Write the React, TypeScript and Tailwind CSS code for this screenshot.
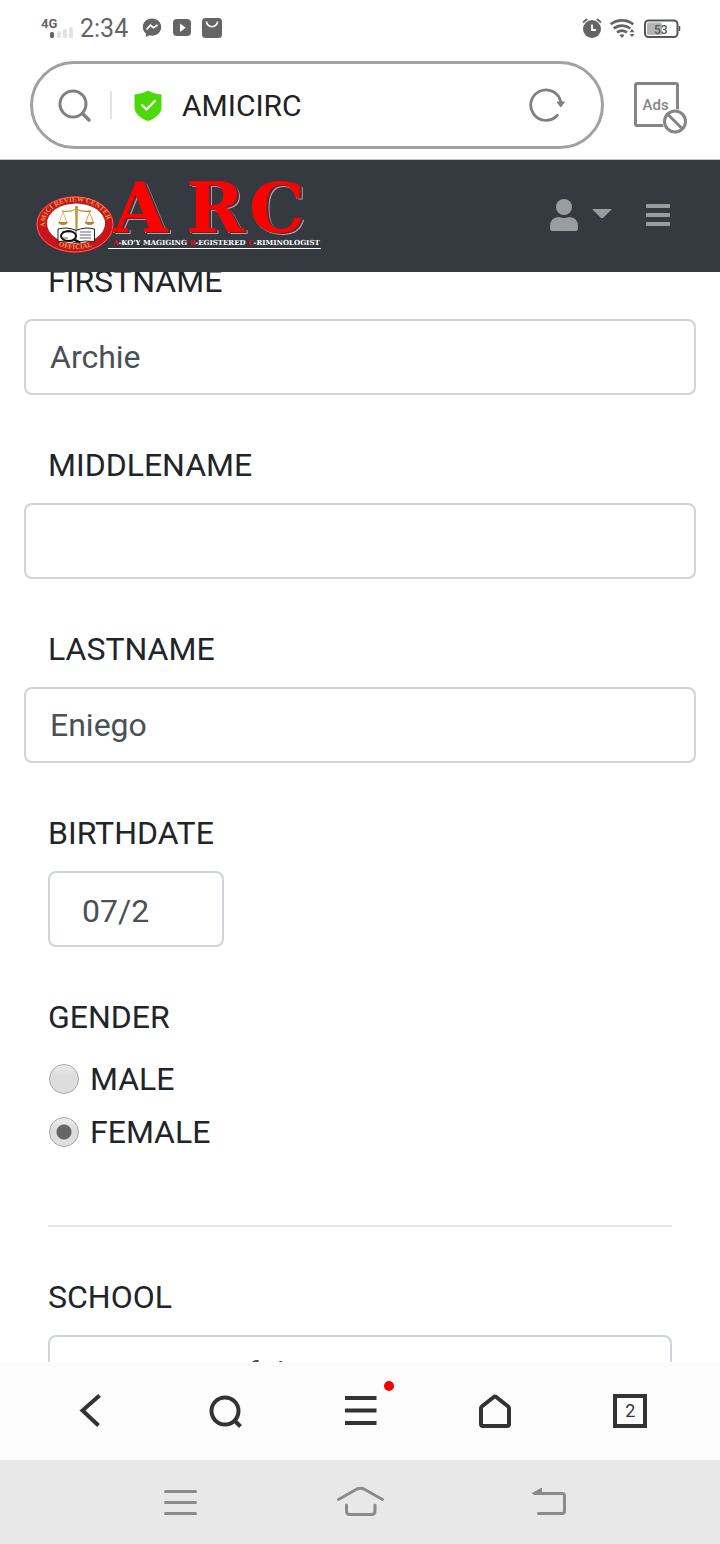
import { useState } from "react";

function StatusBar() {
  return (
    <div className="flex h-14 items-center justify-between pl-10 pr-9 text-[#656565]">
      <div className="flex items-center">
        <svg viewBox="40 14 36 28" className="h-7 w-9" fill="currentColor" aria-label="4G signal">
          <text x="41" y="28" fontFamily="Roboto, sans-serif" fontWeight="700" fontSize="13">4G</text>
          <rect x="50" y="32" width="4" height="6" rx="1.5" />
          <rect x="57" y="31" width="4" height="7" rx="1.5" fill="#e2e2e2" />
          <rect x="63" y="29" width="4" height="9" rx="1.5" fill="#e2e2e2" />
          <rect x="69" y="27" width="4" height="11" rx="1.5" fill="#e2e2e2" />
        </svg>
        <span className="ml-1 w-12 whitespace-nowrap pt-px text-[25px] leading-8">2:34</span>
        <svg viewBox="142 16 82 24" className="ml-[14px] h-6 w-[82px]" aria-hidden="true">
          <path d="M152 18.5c5.4 0 9.2 3.7 9.2 8.6s-3.8 8.6-9.2 8.6c-1 0-1.900-.1-2.700-.4l-3.300 1.700v-3.400c-2-1.600-3.200-3.900-3.200-6.500 0-4.900 3.800-8.600 9.200-8.600z" fill="currentColor" />
          <path d="M146.500 29.500l4-4.300 3 2.500 4-2.600" fill="none" stroke="#fff" strokeWidth="1.800" />
          <rect x="173" y="19" width="18" height="17" rx="4" fill="currentColor" />
          <path d="M180 23.500v8.500l5.700-4.250z" fill="#fff" />
          <rect x="202" y="18" width="20" height="20" rx="3.500" fill="currentColor" />
          <path d="M206.500 21.500a5.500 5.200 0 0 0 11 0" fill="none" stroke="#fff" strokeWidth="1.600" />
        </svg>
      </div>
      <svg viewBox="580 16 104 24" className="h-6 w-[104px]" aria-label="Alarm, wifi, battery 53">
        <circle cx="592" cy="29" r="9" fill="currentColor" />
        <path d="M583 22.500l4-3.500M601 22.500l-4-3.500" stroke="currentColor" strokeWidth="1.800" />
        <path d="M592 24.500v5.500h4" fill="none" stroke="#fff" strokeWidth="1.800" />
        <g fill="none" stroke="currentColor" strokeWidth="2.600">
          <path d="M610.700 24.300c6.500-5.300 16.100-5.300 22.600 0" />
          <path d="M613.700 28.600c5-4 11.600-4 16.600 0" />
          <path d="M617 32.500c3-2.300 7-2.300 10 0" />
        </g>
        <path d="M619.500 35.200c1.500-1.200 3.500-1.200 5 0l-2.500 2.800zM632 29l2.500 3.300h-5zM632 37l2.500-3h-5z" fill="currentColor" />
        <rect x="645" y="20.500" width="32.500" height="16.500" rx="3.500" fill="none" stroke="#555" strokeWidth="2" />
        <rect x="647" y="22.500" width="15" height="12.500" rx="1.500" fill="#b5b5b5" />
        <path d="M679.500 26v5" stroke="#555" strokeWidth="1.500" />
        <text x="654" y="34" fontFamily="Roboto, sans-serif" fontSize="12" fontWeight="500" fill="#555">53</text>
      </svg>
    </div>
  );
}

function AddressBar() {
  return (
    <div className="flex items-center border-b border-[#c4c4c4] pb-[10px] pl-[30px] pr-8 pt-[5px]">
      <div className="flex h-[88px] min-w-0 flex-1 items-center rounded-full border-[3px] border-[#a1a1a1] pl-6 pr-9">
        <svg viewBox="57 88 36 36" className="size-9 shrink-0" fill="none" stroke="#808080" aria-hidden="true">
          <circle cx="73" cy="105" r="13" strokeWidth="3" />
          <path d="M82.500 114.500l6.500 6.500" strokeWidth="3.500" strokeLinecap="round" />
        </svg>
        <span className="ml-[17px] h-7 w-[2px] shrink-0 bg-[#e2e2e2]" />
        <svg viewBox="134 89 28 32" className="ml-[22px] h-8 w-7 shrink-0" aria-label="Secure site">
          <path d="M148 90.500c4.500 2.600 8.700 3.700 13.500 4v12.500c0 7-6 11.300-13.500 14-7.500-2.700-13.500-7-13.500-14V94.500c4.800-.3 9-1.400 13.500-4z" fill="#4cd90a" />
          <path d="M141.500 104.500l5 5 9-9.300" fill="none" stroke="#fff" strokeWidth="2.200" />
        </svg>
        <input aria-label="Address" defaultValue="AMICIRC" className="ml-5 min-w-0 flex-1 bg-transparent pt-[2px] text-[30px] leading-9 text-[#222] outline-none" />
        <button type="button" aria-label="Reload" className="shrink-0">
          <svg viewBox="530 86 36 38" className="h-[38px] w-9" fill="none" stroke="#808080">
            <path d="M558.300 115.200a15.200 15.200 0 1 1 3.500-13.200" strokeWidth="2.800" strokeLinecap="round" />
            <path d="M558 102h7.500l-3.700 5z" fill="#808080" strokeWidth="1" />
          </svg>
        </button>
      </div>
      <button type="button" aria-label="Block ads" className="ml-7 shrink-0">
        <svg viewBox="632 75 56 60" className="h-[60px] w-14" fill="none" stroke="#858585">
          <rect x="635.500" y="83.500" width="42" height="42" rx="1.500" strokeWidth="3" />
          <text x="642.500" y="110" fontFamily="Roboto, sans-serif" fontWeight="500" fontSize="15" fill="#858585" stroke="none">Ads</text>
          <circle cx="675" cy="121.500" r="12.500" fill="#fff" stroke="none" />
          <circle cx="675" cy="121.500" r="10.500" strokeWidth="3" />
          <path d="M667.500 114l15 15" strokeWidth="3" />
        </svg>
      </button>
    </div>
  );
}

function Logo() {
  return (
    <svg viewBox="36 176 288 80" className="block h-20 w-[288px]" aria-label="ARC">
      <defs>
        <path id="ringTop" d="M46 229A31 22 0 1 1 106 229" />
        <path id="ringBottom" d="M56 244.600A35.500 25.500 0 0 0 96 244.600" />
        <linearGradient id="gold" x1="0" y1="0" x2="1" y2="1">
          <stop offset="0" stopColor="#e9bd5c" />
          <stop offset="1" stopColor="#b07a1c" />
        </linearGradient>
      </defs>
      <ellipse cx="75" cy="224.500" rx="39" ry="28.500" fill="#c9151a" />
      <ellipse cx="75" cy="224.500" rx="38" ry="27.500" fill="none" stroke="#e88" strokeWidth=".7" />
      <ellipse cx="76" cy="223.500" rx="29" ry="20" fill="#fff" />
      <g fontFamily="'Liberation Serif', serif" fontWeight="700" fontSize="7" fill="#e2a13c">
        <text><textPath href="#ringTop" startOffset="2">AMICI REVIEW CENTER</textPath></text>
        <text><textPath href="#ringBottom" startOffset="3">OFFICIAL</textPath></text>
      </g>
      <g fill="none" stroke="url(#gold)" strokeWidth="1.300">
        <path d="M62 211q7 1.500 14-2 7 3.500 15 2" />
        <path d="M63 212l-4 11M63 212l4 11M89.500 212l-4 11M89.500 212l4 11" strokeWidth=".8" />
      </g>
      <path d="M75 206h3l-.4 23h3.400v2h-9v-2h3.400z" fill="#c9983a" />
      <path d="M58 222h10q-1 3-5 3t-5-3zM84.500 222h10q-1 3-5 3t-5-3z" fill="#b98429" />
      <g fill="#fff" stroke="#222" strokeWidth="1">
        <path d="M58 229q10-2.500 18 1.500 9-4 18.500-1.500v12.500q-10-1.500-18.500 1-8-2.500-18-1z" />
        <path d="M76 231v11M62 232h10M80 232h11M80 235h11M80 238h11M61 238h7" fill="none" strokeWidth=".7" />
      </g>
      <ellipse cx="68.500" cy="236" rx="7.500" ry="5" fill="none" stroke="#111" strokeWidth="2" />
      <path d="M73.500 239.500l7 3" stroke="#111" strokeWidth="2" />
      <g fontFamily="'DejaVu Serif', serif" fontWeight="700">
        <g
          fontSize="70"
          fill="#f00"
          className="[filter:drop-shadow(2px_1px_0_#343a40)_drop-shadow(1px_1px_0_#dc8b91)]"
        >
          <text x="113" y="232">A</text>
          <text x="186" y="232">R</text>
          <text x="249" y="232">C</text>
        </g>
        <text x="113" y="244.500" fontSize="7" fill="#fff">
          <tspan fill="#f00">A</tspan>-KO'Y MAGIGING <tspan fill="#f00">R</tspan>-EGISTERED <tspan fill="#f00">C</tspan>-RIMINOLOGIST
        </text>
      </g>
      <path d="M108 248.500h213" stroke="#fff" strokeWidth="1.200" />
    </svg>
  );
}

function SiteHeader() {
  return (
    <header className="flex h-28 items-center bg-[#343a40] pl-9 pr-[50px] text-[#9a9da0]">
      <a href="#home" aria-label="ARC home"><Logo /></a>
      <button type="button" aria-label="Account menu" className="ml-auto">
        <svg viewBox="550 199 62 34" className="h-[34px] w-[62px]" fill="currentColor">
          <circle cx="564" cy="207" r="8" />
          <path d="M559 217q5 2 10 0 9 0 9 10v1.500q0 2.500-2.500 2.500h-23q-2.500 0-2.500-2.500V227q0-10 9-10z" />
          <path d="M592 209h20l-9 9h-2z" />
        </svg>
      </button>
      <button type="button" aria-label="Navigation menu" className="ml-[34px]">
        <svg viewBox="646 204 24 24" className="size-6" fill="currentColor">
          <rect x="646" y="204" width="24" height="4" rx=".8" />
          <rect x="646" y="213" width="24" height="4" rx=".8" />
          <rect x="646" y="222" width="24" height="4" rx=".8" />
        </svg>
      </button>
    </header>
  );
}

const labelClass = "block pl-6 mb-[14px]";
const controlClass =
  "h-[76px] rounded-lg border-2 border-[#ced4da] bg-white text-[#495057] outline-none";

function TextField({ id, label, value }: { id: string; label: string; value: string }) {
  return (
    <div>
      <label htmlFor={id} className={labelClass}>{label}</label>
      <input id={id} defaultValue={value} className={`${controlClass} block w-full px-6`} />
    </div>
  );
}

function ProfileForm() {
  const [gender, setGender] = useState("FEMALE");
  return (
    <form className="-mt-[15px] flex flex-col gap-[46px] px-6 text-[32px] leading-[48px] text-[#212529]">
      <TextField id="firstname" label="FIRSTNAME" value="Archie" />
      <TextField id="middlename" label="MIDDLENAME" value="" />
      <TextField id="lastname" label="LASTNAME" value="Eniego" />
      <div>
        <label htmlFor="birthdate" className={labelClass}>BIRTHDATE</label>
        <input id="birthdate" defaultValue="07/2" className={`${controlClass} ml-6 block w-44 px-8 pt-1`} />
      </div>
      <fieldset className="mb-[23px] pl-6">
        <legend className="mb-[14px]">GENDER</legend>
        <div className="flex flex-col gap-[5px]">
          {["MALE", "FEMALE"].map((option) => (
            <label key={option} className="flex items-center gap-[11px]">
              <input
                type="radio"
                name="gender"
                checked={gender === option}
                onChange={() => setGender(option)}
                className="ml-px size-[30px] appearance-none rounded-full border border-[#a5a5a5] bg-[linear-gradient(#ededed,#dcdcdc_40%,#dedede)] checked:bg-[radial-gradient(circle,#666_7px,transparent_8px),linear-gradient(#ededed,#dcdcdc_40%,#dedede)]"
              />
              {option}
            </label>
          ))}
        </div>
      </fieldset>
      <hr className="mx-6 border-t-2 border-[#e5e5e5]" />
      <div>
        <label htmlFor="school" className={labelClass}>SCHOOL</label>
        <div className="px-6">
          <select id="school" className={`${controlClass} block w-full appearance-none px-8`}>
            <option>University of the East</option>
          </select>
        </div>
      </div>
    </form>
  );
}

function BrowserToolbar() {
  return (
    <nav aria-label="Browser" className="grid h-[98px] shrink-0 grid-cols-5 items-center bg-[#fcfcfc] px-[22px] text-[#333]">
      <button type="button" aria-label="Back" className="flex justify-center">
        <svg viewBox="70 1391 40 40" className="size-10" fill="none" stroke="currentColor" strokeWidth="4">
          <path d="M99.500 1395.500l-17 15 16 15" />
        </svg>
      </button>
      <button type="button" aria-label="Search" className="flex justify-center">
        <svg viewBox="205 1391 40 40" className="size-10" fill="none" stroke="currentColor" strokeWidth="4">
          <circle cx="225" cy="1411" r="13.500" />
          <path d="M234.500 1420.500l6 6" />
        </svg>
      </button>
      <button type="button" aria-label="Menu" className="relative flex justify-center">
        <svg viewBox="340 1391 40 40" className="size-10" fill="currentColor">
          <path d="M345 1396h31.500v4H345zM345 1408.500h31.500v4H345zM345 1421h31.500v4H345z" />
        </svg>
        <span className="absolute -top-[10px] left-1/2 ml-6 size-[10px] rounded-full bg-[#f40000]" />
      </button>
      <button type="button" aria-label="Home" className="flex justify-center">
        <svg viewBox="475 1391 40 40" className="size-10" fill="none" stroke="currentColor" strokeWidth="4" strokeLinejoin="round">
          <path d="M493.800 1397q1.200-1 2.400 0l12 9.500q.8.700.8 2v15.500q0 2-2 2h-24q-2 0-2-2v-15.500q0-1.300.8-2z" />
        </svg>
      </button>
      <button type="button" aria-label="2 open tabs" className="flex justify-center">
        <span className="flex size-[34px] items-center justify-center border-4 border-[#333] text-lg leading-none">2</span>
      </button>
    </nav>
  );
}

function SystemNav() {
  return (
    <nav aria-label="System" className="flex h-[84px] shrink-0 items-center justify-between bg-[#e8e8e8] pl-[164px] pr-[153px] text-[#8b8b8b]">
      <button type="button" aria-label="Recent apps">
        <svg viewBox="164 1486 34 32" className="h-8 w-[34px]" stroke="currentColor" strokeWidth="3" strokeLinecap="round">
          <path d="M165.500 1491.500h30M165.500 1502.500h30M165.500 1513.500h30" />
        </svg>
      </button>
      <button type="button" aria-label="Home screen">
        <svg viewBox="336 1486 49 32" className="h-8 w-[49px]" fill="none" stroke="currentColor" strokeWidth="3" strokeLinecap="round">
          <path d="M338.500 1499.500l18.500-10.500q3.500-1.500 7 0l18.500 10.500M346.500 1505v6q0 3.500 3.500 3.500h21.500q3.500 0 3.500-3.500v-6" />
        </svg>
      </button>
      <button type="button" aria-label="Go back">
        <svg viewBox="523 1486 44 32" className="h-8 w-11" fill="none" stroke="currentColor" strokeWidth="3" strokeLinecap="round">
          <path d="M535 1493.500h27q2.500 0 2.500 2.500v15q0 2.500-2.500 2.500h-23.500" />
          <path d="M532 1494v-1l9-5h1v7z" fill="currentColor" stroke="none" />
        </svg>
      </button>
    </nav>
  );
}

export default function App() {
  return (
    <div className="flex h-screen flex-col bg-white font-[Roboto,'Liberation_Sans',sans-serif]">
      <StatusBar />
      <AddressBar />
      <SiteHeader />
      <main className="min-h-0 flex-1 overflow-hidden">
        <ProfileForm />
      </main>
      <BrowserToolbar />
      <SystemNav />
    </div>
  );
}
